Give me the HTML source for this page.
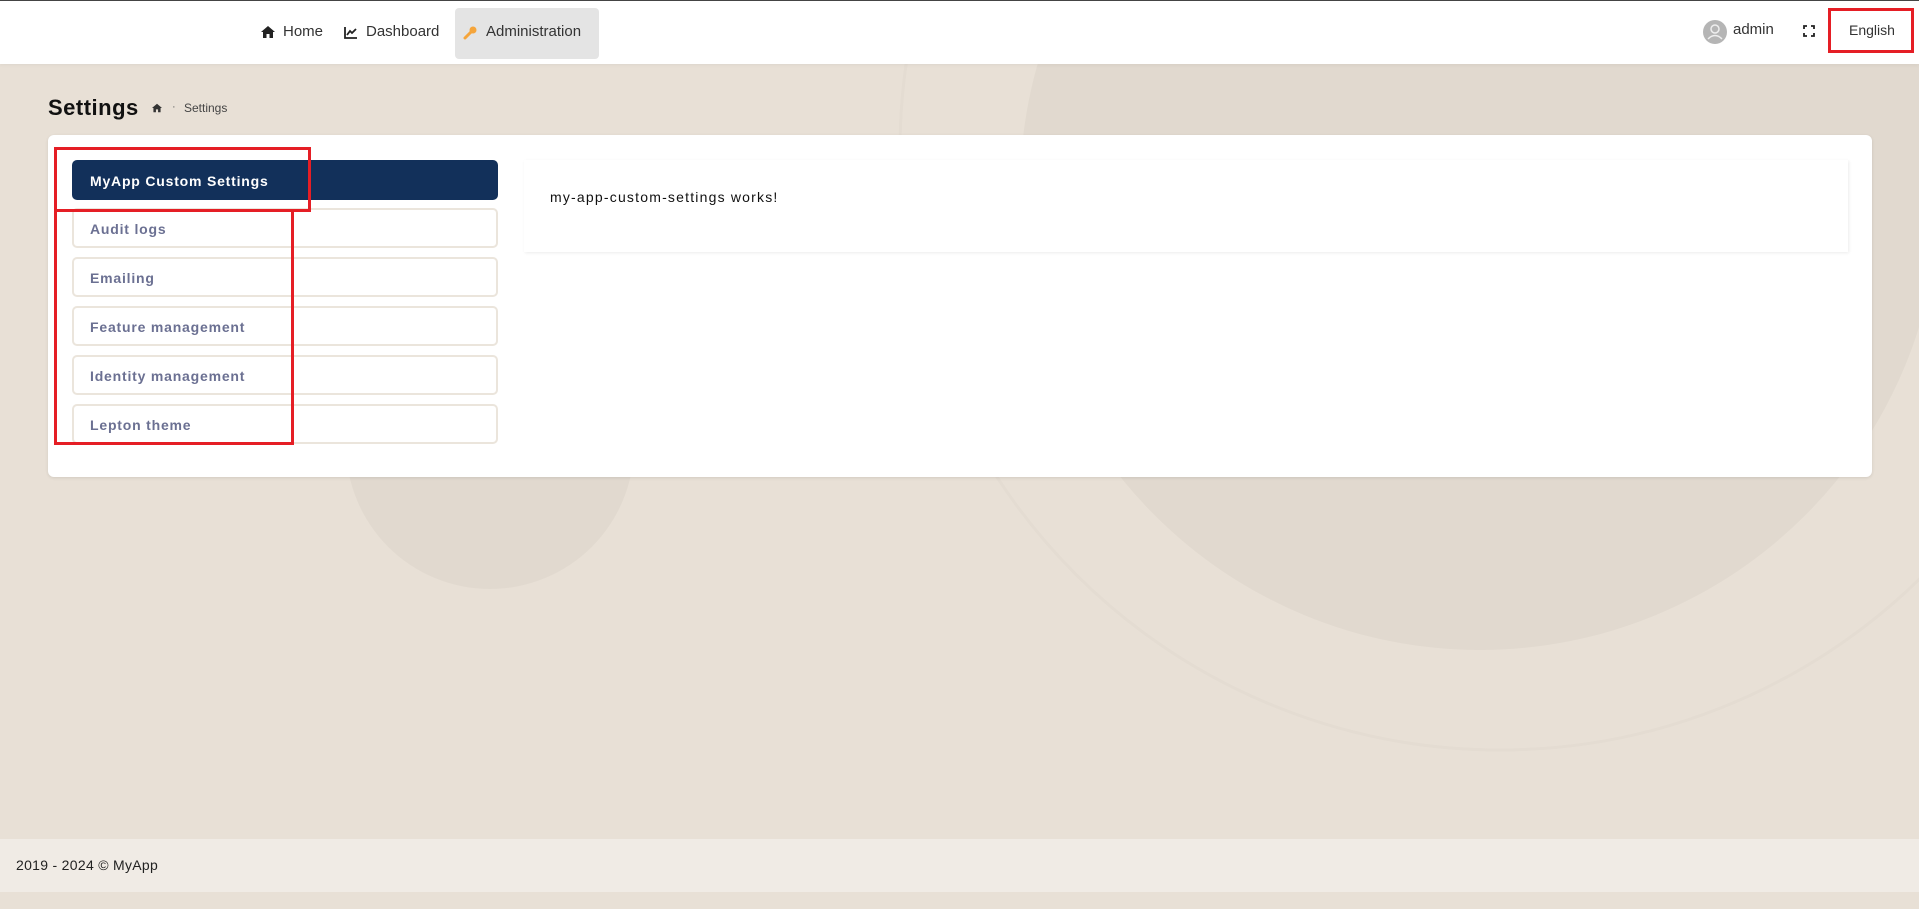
<!DOCTYPE html>
<html><head><meta charset="utf-8"><style>
*{box-sizing:border-box;margin:0;padding:0}
body{width:1919px;height:909px;overflow:hidden;font-family:"Liberation Sans",sans-serif;background:#e8e0d6;position:relative}
.bg{position:absolute;left:0;top:0}
.top{position:absolute;left:0;top:0;width:1919px;height:64px;background:#fff;border-top:1px solid #444;box-shadow:0 1px 4px rgba(0,0,0,.05)}
.nav{position:absolute;top:23px;font-size:15px;color:#333}
.abs{position:absolute}
.card{position:absolute;left:48px;top:135px;width:1824px;height:342px;background:#fff;border-radius:6px;box-shadow:0 1px 3px rgba(0,0,0,.1)}
.item{position:absolute;left:72px;width:426px;height:40px;border:2px solid #ebe5dc;border-radius:5px;font-size:14px;font-weight:bold;color:#6b7092;padding:11px 0 0 16px;letter-spacing:.8px}
.red{position:absolute;border:3px solid #e51e25}
</style></head><body>
<svg class="bg" width="1919" height="909">
<rect width="1919" height="909" fill="#e8e0d6"/>
<circle cx="1480" cy="190" r="460" fill="#e1d9cf"/>
<circle cx="490" cy="445" r="144" fill="#e1d9cf"/>
<circle cx="1500" cy="150" r="600" fill="none" stroke="#e4dcd2" stroke-width="3"/>
</svg>
<div class="top"></div>
<svg class="abs" style="left:260px;top:25px" width="16" height="14" viewBox="0 0 16 14"><path d="M8 1 L1 7 H3 V13 H6.5 V9 H9.5 V13 H13 V7 H15 Z" fill="#222"/></svg>
<div class="nav" style="left:283px">Home</div>
<svg class="abs" style="left:344px;top:26px" width="14" height="13" viewBox="0 0 14 13"><path d="M1 1 V12 H13" stroke="#222" stroke-width="1.8" fill="none"/><path d="M3 9 L6 5 L8 7 L12 3" stroke="#222" stroke-width="1.8" fill="none"/></svg>
<div class="nav" style="left:366px">Dashboard</div>
<div class="abs" style="left:455px;top:8px;width:144px;height:51px;background:#e4e4e4;border-radius:4px"></div>
<svg class="abs" style="left:463px;top:25px" width="15" height="15" viewBox="0 0 15 15"><path d="M2 13 L8 7" stroke="#f5a53b" stroke-width="3" stroke-linecap="round"/><circle cx="10" cy="5" r="3.5" fill="#f5a53b"/></svg>
<div class="nav" style="left:486px;color:#333">Administration</div>
<svg class="abs" style="left:1703px;top:20px" width="24" height="24" viewBox="0 0 24 24"><circle cx="12" cy="12" r="12" fill="#b5b5b5"/><circle cx="12" cy="9" r="4" fill="none" stroke="#eee" stroke-width="1.5"/><path d="M5 19 Q12 12 19 19" fill="none" stroke="#eee" stroke-width="1.5"/></svg>
<div class="nav" style="left:1733px;top:21px">admin</div>
<svg class="abs" style="left:1803px;top:25px" width="12" height="12" viewBox="0 0 12 12"><path d="M1 4V1H4M8 1H11V4M11 8V11H8M4 11H1V8" stroke="#222" stroke-width="1.8" fill="none"/></svg>
<div class="nav" style="left:1849px;top:22px;font-size:14px">English</div>
<div class="red" style="left:1828px;top:8px;width:86px;height:45px"></div>
<div class="abs" style="left:48px;top:95px;font-size:22px;font-weight:bold;color:#111;letter-spacing:.5px">Settings</div>
<svg class="abs" style="left:151px;top:103px" width="12" height="10" viewBox="0 0 16 14"><path d="M8 1 L1 7 H3 V13 H6.5 V9 H9.5 V13 H13 V7 H15 Z" fill="#333"/></svg>
<div class="abs" style="top:101px;font-size:11px;color:#666;left:172px">·</div>
<div class="abs" style="left:184px;top:101px;font-size:12px;color:#444">Settings</div>
<div class="card"></div>
<div class="abs" style="left:524px;top:160px;width:1324px;height:92px;background:#fff;box-shadow:1px 1px 3px rgba(0,0,0,.08)"></div>
<div class="abs" style="left:550px;top:189px;font-size:14px;color:#111;letter-spacing:1.2px">my-app-custom-settings works!</div>
<div class="item" style="top:160px;background:#12305a;border-color:#12305a;color:#fff">MyApp Custom Settings</div>
<div class="item" style="top:208px">Audit logs</div>
<div class="item" style="top:257px">Emailing</div>
<div class="item" style="top:306px">Feature management</div>
<div class="item" style="top:355px">Identity management</div>
<div class="item" style="top:404px">Lepton theme</div>
<div class="red" style="left:54px;top:147px;width:257px;height:65px"></div>
<div class="red" style="left:54px;top:210px;width:240px;height:235px;border-top:none"></div>
<div class="abs" style="left:0;top:839px;width:1919px;height:53px;background:#f0ebe5"></div>
<div class="abs" style="left:16px;top:857px;font-size:14px;color:#222;letter-spacing:.3px">2019 - 2024 © MyApp</div>
</body></html>
